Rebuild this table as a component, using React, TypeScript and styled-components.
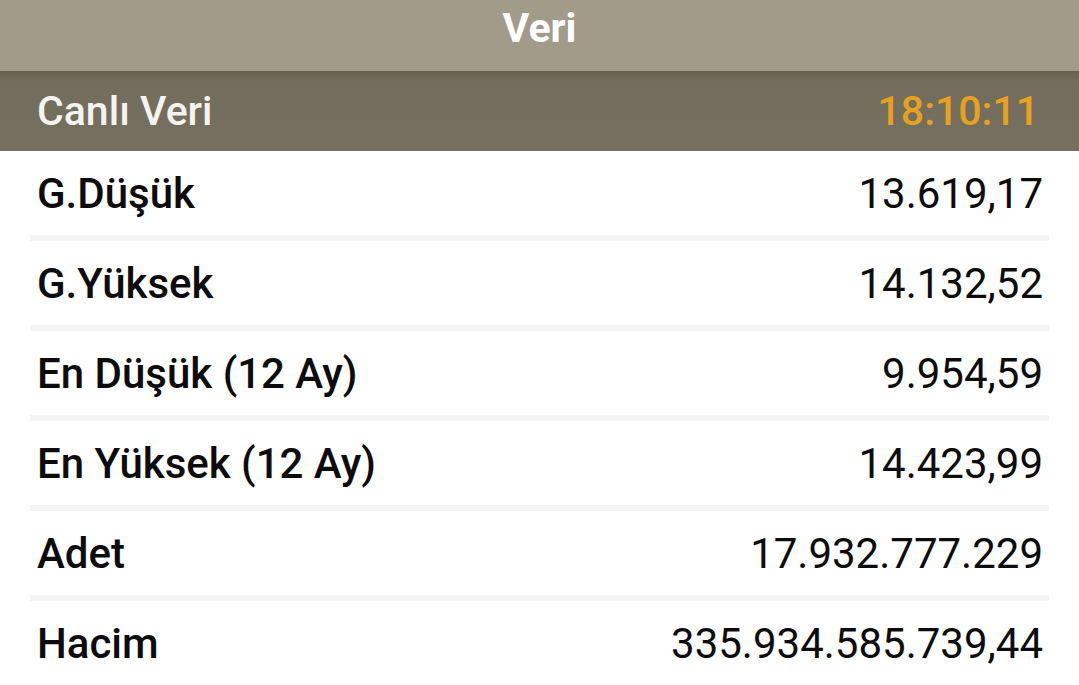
import React from "react";
import styled, { createGlobalStyle } from "styled-components";

const Global = createGlobalStyle`
  html, body { margin: 0; padding: 0; background: #ffffff; }
  body { font-family: Roboto, "Noto Sans", Arial, sans-serif; }
  * { box-sizing: border-box; }
`;

const Page = styled.div`
  width: 1079px;
  height: 685px;
  overflow: hidden;
  background: #ffffff;
  display: flex;
  flex-direction: column;
`;

const TopBar = styled.header`
  height: 71px;
  padding-bottom: 14px;
  background: #a29b8a;
  display: flex;
  align-items: center;
  justify-content: center;
  color: #ffffff;
  font-size: 41px;
  font-weight: 700;
`;

const SubBar = styled.div`
  height: 81px;
  background: linear-gradient(to bottom, #655f50 0px, #736d5d 10px, #756f5f 100%);
  display: flex;
  align-items: center;
  justify-content: space-between;
  padding: 0 40px 0 37px;
  font-size: 41px;
  font-weight: 500;
`;

const SubTitle = styled.span`
  color: #f4f3f0;
`;

const Clock = styled.span`
  color: #e8a11f;
  font-weight: 500;
`;

const List = styled.div`
  display: flex;
  flex-direction: column;
`;

const Row = styled.div`
  height: 84px;
  display: flex;
  align-items: center;
  justify-content: space-between;
  padding: 0 36px 0 37px;
  font-size: 42px;
  color: #0c0c0c;
`;

const Label = styled.span`
  font-weight: 500;
`;

const Value = styled.span`
  font-weight: 400;
`;

const Divider = styled.div`
  height: 6px;
  margin: 0 30px;
  background: #f4f4f4;
`;

const rows: [string, string][] = [
  ["G.Düşük", "13.619,17"],
  ["G.Yüksek", "14.132,52"],
  ["En Düşük (12 Ay)", "9.954,59"],
  ["En Yüksek (12 Ay)", "14.423,99"],
  ["Adet", "17.932.777.229"],
  ["Hacim", "335.934.585.739,44"],
];

export default function App() {
  return (
    <Page>
      <Global />
      <TopBar>Veri</TopBar>
      <SubBar>
        <SubTitle>Canlı Veri</SubTitle>
        <Clock>18:10:11</Clock>
      </SubBar>
      <List>
        {rows.map(([l, v], i) => (
          <React.Fragment key={l}>
            {i > 0 && <Divider />}
            <Row>
              <Label>{l}</Label>
              <Value>{v}</Value>
            </Row>
          </React.Fragment>
        ))}
      </List>
    </Page>
  );
}
